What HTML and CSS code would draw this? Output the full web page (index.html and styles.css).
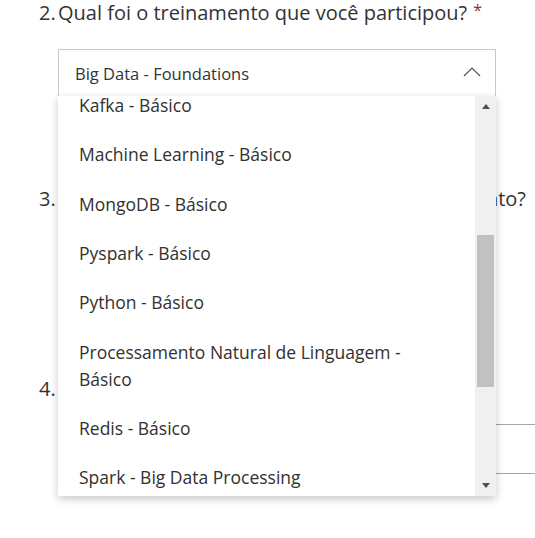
FILE: index.html
```html
<!DOCTYPE html>
<html>
<head>
<meta charset="utf-8">
<link rel="stylesheet" href="styles.css">
</head>
<body>
<div class="page">
  <div class="question q2">
    <div class="title"><span class="num">2.</span><span class="text">Qual foi o treinamento que você participou?</span><span class="req">*</span></div>
    <div class="select">
      <span class="value">Big Data - Foundations</span>
      <svg class="chev" width="18" height="10" viewBox="0 0 18 10"><path d="M1 9 L9 1 L17 9" fill="none" stroke="#555" stroke-width="1.2"/></svg>
    </div>
  </div>
  <div class="question q3">
    <div class="title"><span class="num">3.</span><span class="text long">Qual a sua avaliação sobre o treinamento?</span></div>
  </div>
  <div class="question q4">
    <div class="title"><span class="num">4.</span><span class="text">Comentários</span></div>
    <div class="line"></div>
    <div class="line"></div>
  </div>

  <div class="menu">
    <div class="items">
      <div class="item">Kafka - Básico</div>
      <div class="item">Machine Learning - Básico</div>
      <div class="item">MongoDB - Básico</div>
      <div class="item">Pyspark - Básico</div>
      <div class="item">Python - Básico</div>
      <div class="item">Processamento Natural de Linguagem - Básico</div>
      <div class="item">Redis - Básico</div>
      <div class="item">Spark - Big Data Processing</div>
      <div class="item">SQL - Básico</div>
    </div>
    <div class="scrollbar">
      <div class="arrow up"></div>
      <div class="track"><div class="thumb"></div></div>
      <div class="arrow down"></div>
    </div>
  </div>
</div>
</body>
</html>
```
FILE: styles.css
```css
html, body {
  margin: 0;
  padding: 0;
  background: #fff;
}
body {
  font-family: "Open Sans", "Noto Sans", sans-serif;
  color: #333;
  width: 535px;
  height: 538px;
  overflow: hidden;
}
.page {
  position: relative;
  width: 535px;
  height: 538px;
}
.question {
  padding-left: 39px;
  padding-right: 9px;
}
.title {
  display: flex;
  align-items: baseline;
  font-size: 20px;
  line-height: 26px;
  white-space: nowrap;
  color: #333;
}
.num {
  width: 19px;
  flex: none;
}
.req {
  color: #a4262c;
  font-size: 16px;
  margin-left: 6px;
  position: relative;
  top: -4px;
}
.select {
  margin-top: 22px;
  margin-left: 19px;
  height: 46px;
  width: 406px;
  border: 1px solid #c8c8c8;
  display: flex;
  align-items: center;
  justify-content: space-between;
  padding: 0 14px 0 16px;
  background: #fff;
}
.value {
  font-size: 16.5px;
  color: #333;
}
.chev {
  margin-top: -2px;
}
.q3 {
  margin-top: 89px;
}
.q3 .long {
  margin-left: auto;
}
.q4 {
  margin-top: 164px;
}
.line {
  margin-left: 19px;
  margin-right: -9px;
  height: 1px;
  background: #a6a6a6;
  margin-top: 22px;
}
.q4 .line + .line {
  margin-top: 48px;
}

.menu {
  position: absolute;
  left: 58px;
  top: 96px;
  width: 438px;
  height: 400px;
  display: flex;
  background: #fff;
  box-shadow: 0 3px 8px rgba(0,0,0,0.22);
  overflow: hidden;
}
.items {
  flex: 1;
  overflow: hidden;
}
.item {
  padding: 11.15px 40px 11.15px 21px;
  font-size: 17.5px;
  line-height: 27px;
  color: #323130;
}
.item:first-child {
  margin-top: -15px;
}
.scrollbar {
  width: 21px;
  flex: none;
  background: #f0f0f0;
  display: flex;
  flex-direction: column;
  align-items: center;
}
.arrow {
  width: 0;
  height: 0;
  border-left: 4px solid transparent;
  border-right: 4px solid transparent;
}
.arrow.up {
  margin-top: 8px;
  border-bottom: 5px solid #505050;
}
.arrow.down {
  margin-bottom: 8px;
  border-top: 5px solid #505050;
}
.track {
  flex: 1;
  width: 100%;
}
.thumb {
  margin: 126px 2px 0 2px;
  height: 152px;
  background: #c1c1c1;
}
```
